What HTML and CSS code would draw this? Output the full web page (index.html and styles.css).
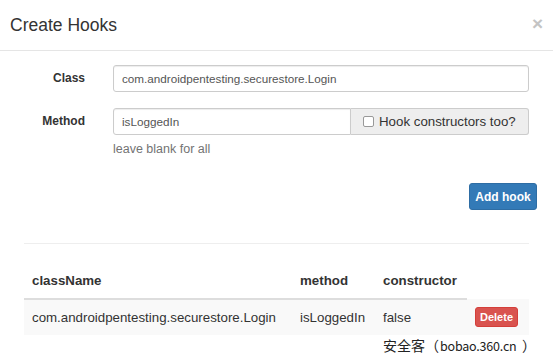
FILE: index.html
```html
<!doctype html>
<html lang="en">
<head>
  <meta charset="UTF-8">
  <title>Create Hooks</title>
  <link rel="stylesheet" href="styles.css">
</head>
<body>
  <div class="modal">
    <div class="modal-header">
      <h4 class="modal-title">Create Hooks</h4>
      <span class="close">&times;</span>
    </div>
    <div class="modal-body">
      <form class="hook-form">
        <div class="form-row">
          <label class="form-label">Class</label>
          <input class="form-input" type="text" value="com.androidpentesting.securestore.Login">
        </div>
        <div class="form-row method-row">
          <label class="form-label">Method</label>
          <div class="field">
            <div class="input-group">
              <input class="form-input" type="text" value="isLoggedIn">
              <span class="addon"><span class="check"></span>Hook constructors too?</span>
            </div>
            <p class="help">leave blank for all</p>
          </div>
        </div>
        <div class="actions">
          <button class="btn-primary" type="button">Add hook</button>
        </div>
      </form>
      <hr class="divider">
      <table class="hooks">
        <colgroup>
          <col class="col-class">
          <col class="col-method">
          <col class="col-ctor">
          <col class="col-action">
        </colgroup>
        <thead>
          <tr>
            <th>className</th>
            <th>method</th>
            <th>constructor</th>
          </tr>
        </thead>
        <tbody>
          <tr>
            <td>com.androidpentesting.securestore.Login</td>
            <td>isLoggedIn</td>
            <td>false</td>
            <td><button class="btn-danger" type="button">Delete</button></td>
          </tr>
        </tbody>
      </table>
    </div>
  </div>
  <div class="watermark">安全客<span class="paren">（</span><span class="site">bobao.360.cn</span><span class="paren">）</span></div>
</body>
</html>
```
FILE: styles.css
```css
* { margin: 0; padding: 0; box-sizing: border-box; }
body { font-family: "Liberation Sans", Arial, sans-serif; color: #333; background: #fff; width: 553px; height: 364px; position: relative; overflow: hidden; }

.modal-header { height: 51px; padding: 12px 10px; border-bottom: 1px solid #e5e5e5; display: flex; justify-content: space-between; align-items: center; }
.modal-title { font-size: 17.5px; font-weight: normal; line-height: 26px; }
.close { color: #c4c4c4; font-size: 19px; font-weight: bold; line-height: 1; margin-top: -3px; }

.modal-body { padding: 14px 24px 0 24px; }

.form-row { display: flex; align-items: flex-start; gap: 28px; }
.method-row { margin-top: 16px; }
.form-label { width: 61px; text-align: right; font-size: 12px; font-weight: bold; line-height: 27px; color: #333; }
.form-input { flex: 1; height: 27px; border: 1px solid #ccc; border-radius: 3px; padding: 0 8px; font-family: inherit; font-size: 11.7px; color: #555; box-shadow: inset 0 1px 1px rgba(0,0,0,.075); outline: none; }
.field { flex: 1; }
.input-group { display: flex; }
.input-group .form-input { border-radius: 3px 0 0 3px; min-width: 0; }
.addon { width: 178px; height: 27px; background: #eee; border: 1px solid #ccc; border-left: 0; border-radius: 0 3px 3px 0; display: flex; align-items: center; padding-left: 12px; font-size: 13.3px; color: #333; }
.check { width: 11px; height: 11px; border: 1px solid #999; border-radius: 2px; background: #fff; margin-right: 5px; }
.help { font-size: 12.5px; color: #737373; line-height: 18px; margin-top: 5px; }

.actions { display: flex; justify-content: flex-end; margin-top: 25px; margin-right: -8px; }
.btn-primary { width: 68px; height: 27px; background: #337ab7; border: 1px solid #2e6da4; border-radius: 3px; color: #fff; font-family: inherit; font-size: 12px; font-weight: bold; }

.divider { border: 0; border-top: 1px solid #eee; margin-top: 33px; }

.hooks { width: 100%; table-layout: fixed; border-collapse: collapse; margin-top: 20px; font-size: 13.3px; }
.hooks th { text-align: left; padding: 8px; line-height: 18px; border-bottom: 2px solid #ddd; }
.hooks td { padding: 8px; line-height: 18px; background: #f9f9f9; }
.col-class { width: 268px; }
.col-method { width: 83px; }
.col-ctor { width: 92px; }
.btn-danger { width: 43px; height: 20px; background: #d9534f; border: 1px solid #d43f3a; border-radius: 3px; color: #fff; font-family: inherit; font-size: 11px; font-weight: bold; vertical-align: middle; }

.watermark { position: absolute; left: 383px; top: 336px; font-family: "Noto Sans CJK SC", sans-serif; font-size: 14px; line-height: 18px; color: #222; }
.paren { display: inline-block; width: 15px; }
.paren + .site { margin-left: 0; }
.site { display: inline-block; width: 75px; font-size: 12.5px; letter-spacing: -0.2px; }
.paren:last-child { width: 22px; padding-left: 7px; }
```
